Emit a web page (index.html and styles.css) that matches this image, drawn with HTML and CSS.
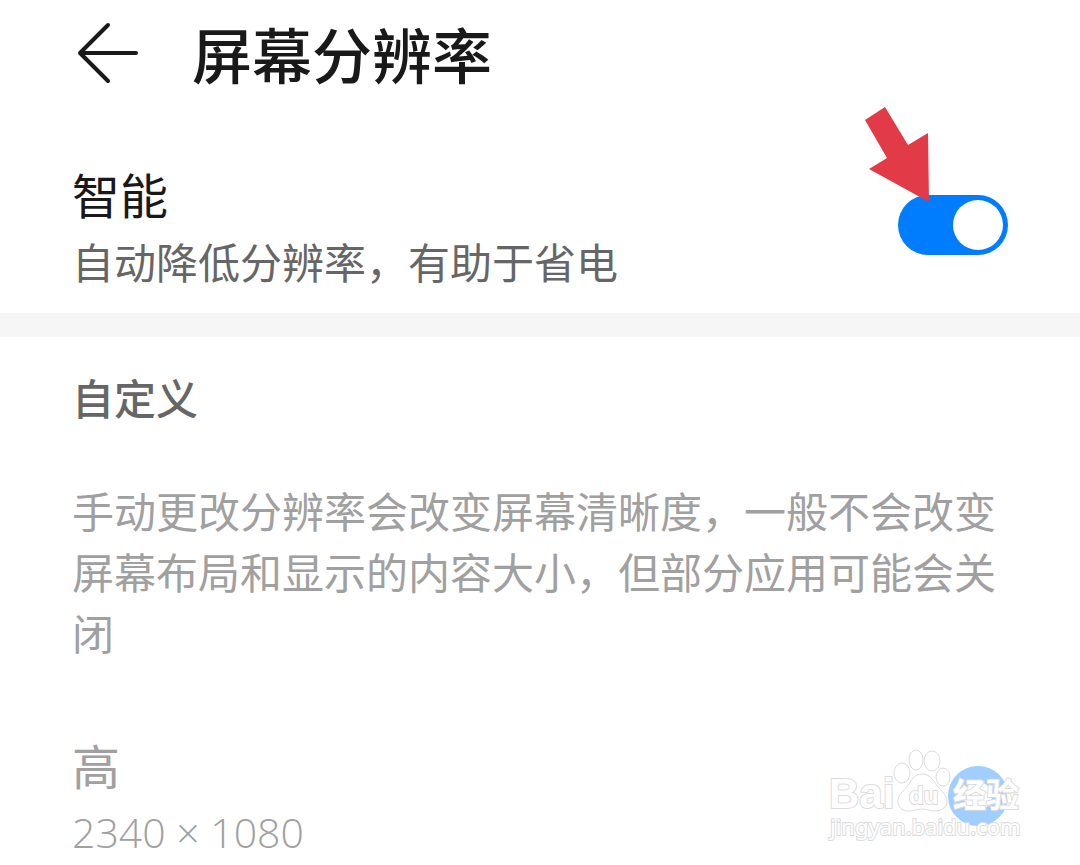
FILE: index.html
```html
<!DOCTYPE html>
<html lang="zh-CN">
<head>
    <meta charset="UTF-8">
    <meta name="viewport" content="width=device-width, initial-scale=1.0">
    <title>屏幕分辨率</title>
    <link rel="stylesheet" href="styles.css">
</head>
<body>
    <header class="header">
        <button type="button" class="back" aria-label="返回">
            <svg viewBox="0 0 72 72" width="72" height="72">
                <path d="M36 8 L8 36 L36 64 M8 36 H64"/>
            </svg>
        </button>
        <h1>屏幕分辨率</h1>
    </header>

    <main>
        <section class="row smart">
            <label for="smart">
                <span class="name">智能</span>
                <span class="detail">自动降低分辨率，有助于省电</span>
            </label>
            <div class="switch-box">
                <input type="checkbox" id="smart" class="switch" role="switch" checked>
                <svg class="pointer" viewBox="0 0 66 96" width="66" height="96">
                    <polygon points="0,13 20,0 43,38 63,26 64,95 4,62 22,51"/>
                </svg>
            </div>
        </section>

        <section class="custom">
            <h2>自定义</h2>
            <p class="note">手动更改分辨率会改变屏幕清晰度，一般不会改变屏幕布局和显示的内容大小，但部分应用可能会关闭</p>
            <div class="row disabled">
                <label for="high">
                    <span class="name">高</span>
                    <span class="detail size">2340 × 1080</span>
                </label>
                <div class="radio-box">
                    <input type="radio" id="high" name="resolution" class="radio" checked disabled>
                    <svg class="watermark" viewBox="0 0 210 105" width="210" height="105">
                        <text class="logo" x="9" y="68">Bai</text>
                        <ellipse cx="82" cy="33" rx="8" ry="10"/>
                        <ellipse cx="96" cy="20" rx="7" ry="10"/>
                        <ellipse cx="112" cy="21" rx="8" ry="10"/>
                        <ellipse cx="123" cy="37" rx="7" ry="9"/>
                        <path d="M102 34 C111 34 114 42 119 48 C124 53 127 57 127 61 C127 67 122 71 115 71 C110 71 107 69 102 69 C97 69 94 71 89 71 C82 71 78 67 78 61 C78 56 82 52 86 48 C91 42 93 34 102 34 Z"/>
                        <text class="du" x="89" y="64">du</text>
                        <text class="jingyan" x="133" y="67">经验</text>
                        <text class="site" x="10" y="95">jingyan.baidu.com</text>
                    </svg>
                </div>
            </div>
        </section>
    </main>
</body>
</html>
```
FILE: styles.css
```css
* {
    box-sizing: border-box;
}
body {
    margin: 0;
    background: #fff;
    color: #191919;
    font-family: "Noto Sans CJK SC", sans-serif;
}
h1, h2, p {
    margin: 0;
}
.header {
    display: flex;
    align-items: center;
    gap: 48px;
    height: 106px;
    padding: 0 72px;
}
.back {
    width: 72px;
    height: 72px;
    padding: 0;
    border: none;
    background: none;
    cursor: pointer;
}
.back svg {
    display: block;
    fill: none;
    stroke: #191919;
    stroke-width: 4;
    stroke-linecap: round;
    stroke-linejoin: round;
}
h1 {
    font-size: 60px;
    font-weight: 500;
    line-height: 72px;
}
.row {
    display: flex;
    align-items: center;
    justify-content: space-between;
}
.smart {
    padding: 51px 72px 20px;
    border-bottom: 24px solid #f6f6f6;
}
.name, .detail {
    display: block;
}
.name {
    font-size: 48px;
    line-height: 72px;
}
.detail {
    color: #666;
    font-size: 42px;
    line-height: 64px;
}
.switch-box, .radio-box {
    position: relative;
}
.switch {
    appearance: none;
    display: block;
    width: 110px;
    height: 60px;
    margin: 0;
    padding: 5px;
    border-radius: 30px;
    background: #007dff;
}
.switch::before {
    content: "";
    display: block;
    width: 50px;
    height: 50px;
    margin-left: auto;
    border-radius: 50%;
    background: #fff;
}
.pointer {
    position: absolute;
    left: -33px;
    top: -88px;
    fill: #e23a46;
}
.custom {
    padding: 30px 72px 0;
}
h2 {
    color: #666;
    font-size: 42px;
    font-weight: 500;
    line-height: 60px;
}
.note {
    margin: 52px 0 66px;
    color: #a0a0a0;
    font-size: 42px;
    line-height: 61px;
}
.disabled .name, .disabled .detail {
    color: #a0a0a0;
}
.disabled .size {
    font-family: "Open Sans", "Noto Sans", sans-serif;
    font-size: 41px;
    font-weight: 300;
}
.radio {
    appearance: none;
    display: block;
    width: 60px;
    height: 60px;
    margin: 0;
    border: 16px solid #9fceff;
    border-radius: 50%;
    background: #fff;
}
.watermark {
    position: absolute;
    right: -22px;
    bottom: -19px;
    fill: #fff;
    stroke: #dcdcdc;
    stroke-width: 1;
}
.watermark text {
    font-family: "Liberation Sans", "Noto Sans CJK SC", sans-serif;
    font-weight: bold;
    paint-order: stroke;
    stroke-width: 2;
}
.watermark .logo {
    font-size: 42px;
}
.watermark .du {
    font-size: 24px;
}
.watermark .jingyan {
    font-size: 33px;
}
.watermark .site {
    font-family: "Noto Sans", sans-serif;
    font-size: 22px;
    font-weight: 400;
}
```
